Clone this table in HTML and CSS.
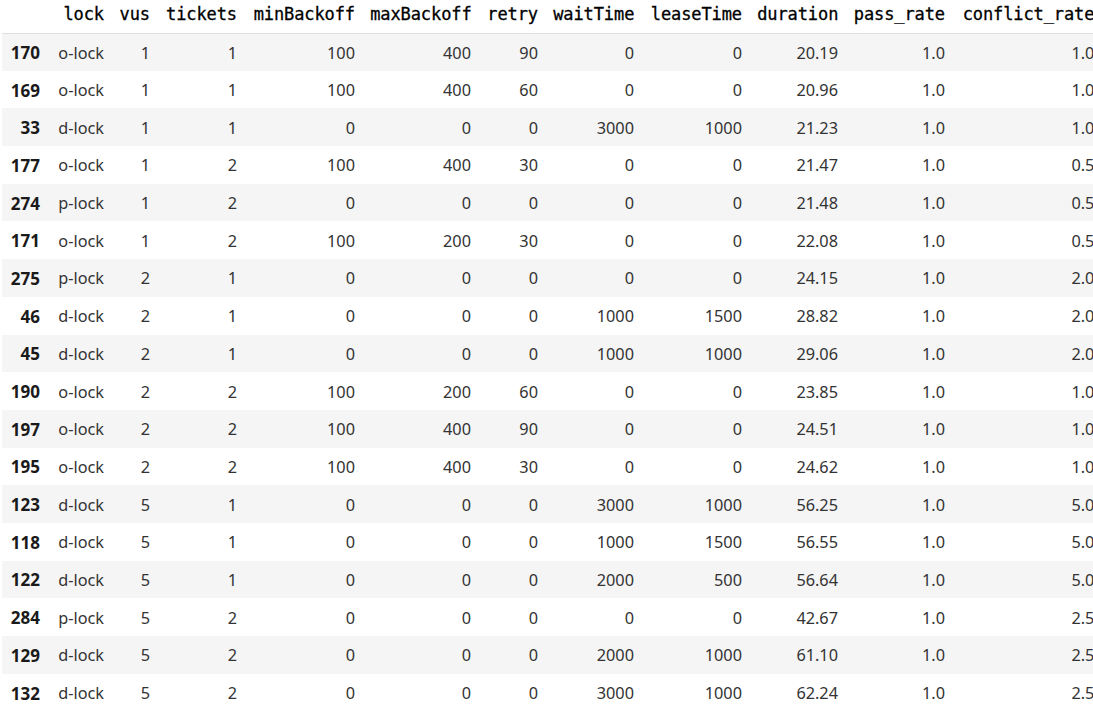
FILE: index.html
```html
<!DOCTYPE html>
<html>
<head>
<meta charset="utf-8">
<link rel="stylesheet" href="styles.css">
</head>
<body>
<table class="df">
<colgroup>
<col class="c-idx"><col class="c-lock"><col class="c-vus"><col class="c-tickets"><col class="c-min"><col class="c-max"><col class="c-retry"><col class="c-wait"><col class="c-lease"><col class="c-dur"><col class="c-pass"><col class="c-conf">
</colgroup>
<thead>
<tr><th></th><th>lock</th><th>vus</th><th>tickets</th><th>minBackoff</th><th>maxBackoff</th><th>retry</th><th>waitTime</th><th>leaseTime</th><th>duration</th><th>pass_rate</th><th>conflict_rate</th></tr>
</thead>
<tbody>
<tr><th>170</th><td>o-lock</td><td>1</td><td>1</td><td>100</td><td>400</td><td>90</td><td>0</td><td>0</td><td>20.19</td><td>1.0</td><td>1.0</td></tr>
<tr><th>169</th><td>o-lock</td><td>1</td><td>1</td><td>100</td><td>400</td><td>60</td><td>0</td><td>0</td><td>20.96</td><td>1.0</td><td>1.0</td></tr>
<tr><th>33</th><td>d-lock</td><td>1</td><td>1</td><td>0</td><td>0</td><td>0</td><td>3000</td><td>1000</td><td>21.23</td><td>1.0</td><td>1.0</td></tr>
<tr><th>177</th><td>o-lock</td><td>1</td><td>2</td><td>100</td><td>400</td><td>30</td><td>0</td><td>0</td><td>21.47</td><td>1.0</td><td>0.5</td></tr>
<tr><th>274</th><td>p-lock</td><td>1</td><td>2</td><td>0</td><td>0</td><td>0</td><td>0</td><td>0</td><td>21.48</td><td>1.0</td><td>0.5</td></tr>
<tr><th>171</th><td>o-lock</td><td>1</td><td>2</td><td>100</td><td>200</td><td>30</td><td>0</td><td>0</td><td>22.08</td><td>1.0</td><td>0.5</td></tr>
<tr><th>275</th><td>p-lock</td><td>2</td><td>1</td><td>0</td><td>0</td><td>0</td><td>0</td><td>0</td><td>24.15</td><td>1.0</td><td>2.0</td></tr>
<tr><th>46</th><td>d-lock</td><td>2</td><td>1</td><td>0</td><td>0</td><td>0</td><td>1000</td><td>1500</td><td>28.82</td><td>1.0</td><td>2.0</td></tr>
<tr><th>45</th><td>d-lock</td><td>2</td><td>1</td><td>0</td><td>0</td><td>0</td><td>1000</td><td>1000</td><td>29.06</td><td>1.0</td><td>2.0</td></tr>
<tr><th>190</th><td>o-lock</td><td>2</td><td>2</td><td>100</td><td>200</td><td>60</td><td>0</td><td>0</td><td>23.85</td><td>1.0</td><td>1.0</td></tr>
<tr><th>197</th><td>o-lock</td><td>2</td><td>2</td><td>100</td><td>400</td><td>90</td><td>0</td><td>0</td><td>24.51</td><td>1.0</td><td>1.0</td></tr>
<tr><th>195</th><td>o-lock</td><td>2</td><td>2</td><td>100</td><td>400</td><td>30</td><td>0</td><td>0</td><td>24.62</td><td>1.0</td><td>1.0</td></tr>
<tr><th>123</th><td>d-lock</td><td>5</td><td>1</td><td>0</td><td>0</td><td>0</td><td>3000</td><td>1000</td><td>56.25</td><td>1.0</td><td>5.0</td></tr>
<tr><th>118</th><td>d-lock</td><td>5</td><td>1</td><td>0</td><td>0</td><td>0</td><td>1000</td><td>1500</td><td>56.55</td><td>1.0</td><td>5.0</td></tr>
<tr><th>122</th><td>d-lock</td><td>5</td><td>1</td><td>0</td><td>0</td><td>0</td><td>2000</td><td>500</td><td>56.64</td><td>1.0</td><td>5.0</td></tr>
<tr><th>284</th><td>p-lock</td><td>5</td><td>2</td><td>0</td><td>0</td><td>0</td><td>0</td><td>0</td><td>42.67</td><td>1.0</td><td>2.5</td></tr>
<tr><th>129</th><td>d-lock</td><td>5</td><td>2</td><td>0</td><td>0</td><td>0</td><td>2000</td><td>1000</td><td>61.10</td><td>1.0</td><td>2.5</td></tr>
<tr><th>132</th><td>d-lock</td><td>5</td><td>2</td><td>0</td><td>0</td><td>0</td><td>3000</td><td>1000</td><td>62.24</td><td>1.0</td><td>2.5</td></tr>
</tbody>
</table>
</body>
</html>
```
FILE: styles.css
```css
html, body {
  margin: 0;
  padding: 0;
  background: #fff;
  overflow: hidden;
}
body {
  width: 1093px;
  height: 705px;
}
.df {
  margin-left: 2px;
  border-collapse: collapse;
  border-spacing: 0;
  table-layout: fixed;
  width: 1100px;
  font-family: "Noto Sans", "Open Sans", sans-serif;
  font-size: 16.3px;
  color: #333;
}
.c-idx { width: 45.6px; }
.c-lock { width: 64px; }
.c-vus { width: 46px; }
.c-tickets { width: 87px; }
.c-min { width: 118px; }
.c-max { width: 116px; }
.c-retry { width: 67px; }
.c-wait { width: 96px; }
.c-lease { width: 108px; }
.c-dur { width: 96px; }
.c-pass { width: 107px; }
.c-conf { width: 149.4px; }
.df th, .df td {
  padding: 0 7.6px;
  text-align: right;
  vertical-align: middle;
  white-space: nowrap;
  overflow: visible;
}
.df thead tr {
  height: 33px;
}
.df thead th {
  font-family: "DejaVu Sans Mono", "Liberation Mono", monospace;
  font-size: 17px;
  font-weight: normal;
  color: #000;
  -webkit-text-stroke: 0.3px #000;
  border-bottom: 1px solid #e0e0e0;
  padding-top: 0;
  padding-bottom: 4px;
  letter-spacing: -0.1px;
}
.df tbody tr {
  height: 37.7px;
}
.df tbody tr:nth-child(odd) {
  background: #f5f5f5;
}
.df tbody td {
  padding-top: 1px;
}
.df tbody th {
  font-weight: bold;
  color: #1a1a1a;
  font-size: 17px;
  padding-top: 1px;
}
```
